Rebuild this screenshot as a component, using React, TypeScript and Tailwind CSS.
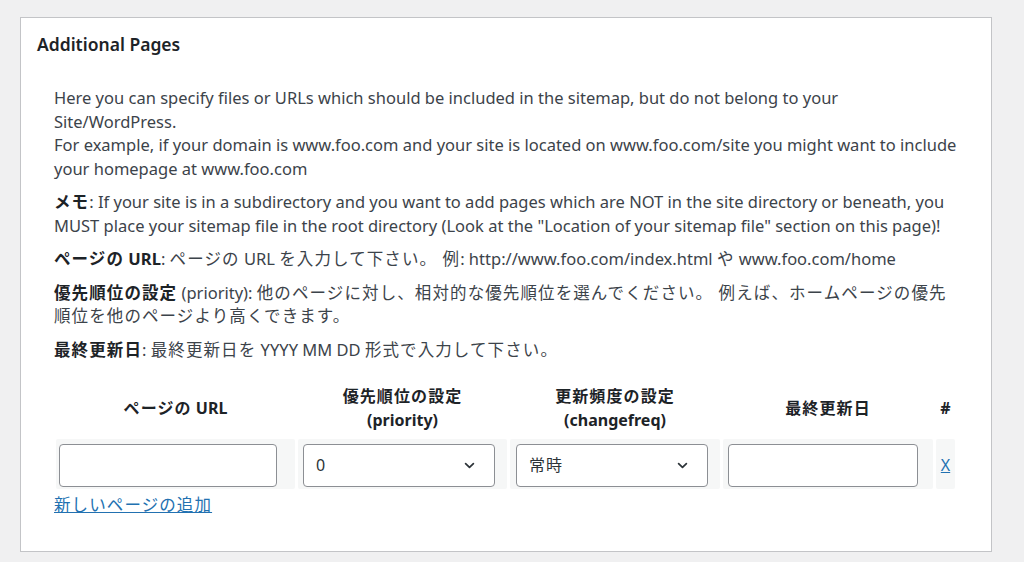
import React from "react";

const font = "font-['Noto_Sans','Noto_Sans_CJK_JP',sans-serif]";

// Japanese runs are a little wider in the reference than Noto CJK gives
const J: React.FC<{ children: React.ReactNode }> = ({ children }) => (
  <span className="tracking-[1.1px]">{children}</span>
);

const Chevron: React.FC = () => (
  <svg width="13" height="13" viewBox="0 0 20 20" className="text-[#2c3338]">
    <path d="M4 7l6 6 6-6" fill="none" stroke="currentColor" strokeWidth="2.6" strokeLinecap="round" strokeLinejoin="round" />
  </svg>
);

const SelectBox: React.FC<{ value: React.ReactNode; width: string }> = ({ value, width }) => (
  <div
    className={`${width} h-[43px] flex items-center justify-between pl-[12px] pr-[18px] bg-white border border-[#8c8f94] rounded-[4px] text-[16px] text-[#2c3338]`}
  >
    <span>{value}</span>
    <Chevron />
  </div>
);

export default function App() {
  return (
    <div className={`min-h-[562px] bg-[#f0f0f1] pt-[17px] pl-[20px] ${font}`}>
      <div className="w-[972px] h-[535px] bg-white border border-[#c3c4c7]">
        <h2 className="pl-[16px] pt-[14px] text-[17.5px] font-semibold text-[#1d2327] leading-[24px]">
          Additional Pages
        </h2>
        <div className="pl-[33px] pt-[30px] text-[16.5px] leading-[23.5px] text-[#3c434a]">
          <p>
            Here you can specify files or URLs which should be included in the sitemap, but do not belong to your
            <br />
            Site/WordPress.
            <br />
            For example, if your domain is www.foo.com and your site is located on www.foo.com/site you might want to include
            <br />
            your homepage at www.foo.com
          </p>
          <p className="mt-[10px]">
            <b className="font-bold text-[#1d2327]">
              <J>メモ</J>
            </b>
            : If your site is in a subdirectory and you want to add pages which are NOT in the site directory or beneath, you
            <br />
            MUST place your sitemap file in the root directory (Look at the "Location of your sitemap file" section on this page)!
          </p>
          <p className="mt-[10px]">
            <b className="font-bold text-[#1d2327]">
              <J>ページの</J> URL
            </b>
            : <J>ページの</J> URL <J>を入力して下さい。 例</J>: http://www.foo.com/index.html <J>や</J> www.foo.com/home
          </p>
          <p className="mt-[10px]">
            <b className="font-bold text-[#1d2327]">
              <J>優先順位の設定</J>
            </b>{" "}
            (priority): <J>他のページに対し、相対的な優先順位を選んでください。 例えば、ホームページの優先</J>
            <br />
            <J>順位を他のページより高くできます。</J>
          </p>
          <p className="mt-[10px]">
            <b className="font-bold text-[#1d2327]">
              <J>最終更新日</J>
            </b>
            : <J>最終更新日を</J> YYYY MM DD <J>形式で入力して下さい。</J>
          </p>

          <table className="mt-[20px] -ml-[1px] w-[905px] table-fixed border-separate border-spacing-[3px] text-[16px]">
            <thead>
              <tr className="font-bold text-[#1d2327] leading-[24px]">
                <th className="w-[239px] pb-[4px]">
                  <J>ページの</J> URL
                </th>
                <th className="w-[209px] pb-[4px]">
                  <J>優先順位の設定</J>
                  <br />
                  (priority)
                </th>
                <th className="w-[210px] pb-[4px]">
                  <J>更新頻度の設定</J>
                  <br />
                  (changefreq)
                </th>
                <th className="w-[210px] pb-[4px]">
                  <J>最終更新日</J>
                </th>
                <th className="w-[19px] pb-[4px]">#</th>
              </tr>
            </thead>
            <tbody>
              <tr>
                <td className="bg-[#f6f7f7] pl-[3px] pt-[5px] pb-[2px] rounded-[2px]">
                  <input className="w-[218px] h-[43px] border border-[#8c8f94] rounded-[4px] bg-white" />
                </td>
                <td className="bg-[#f6f7f7] pl-[5px] pt-[5px] pb-[2px] rounded-[2px]">
                  <SelectBox value="0" width="w-[192px]" />
                </td>
                <td className="bg-[#f6f7f7] pl-[6px] pt-[5px] pb-[2px] rounded-[2px]">
                  <SelectBox value={<J>常時</J>} width="w-[192px]" />
                </td>
                <td className="bg-[#f6f7f7] pl-[5px] pt-[5px] pb-[2px] rounded-[2px]">
                  <input className="w-[190px] h-[43px] border border-[#8c8f94] rounded-[4px] bg-white" />
                </td>
                <td className="bg-[#f6f7f7] text-center pt-[4px] rounded-[2px]">
                  <a href="#" className="text-[#2271b1] underline">
                    X
                  </a>
                </td>
              </tr>
            </tbody>
          </table>
          <a href="#" className="block mt-[1px] text-[#2271b1] underline w-fit">
            <J>新しいページの追加</J>
          </a>
        </div>
      </div>
    </div>
  );
}
